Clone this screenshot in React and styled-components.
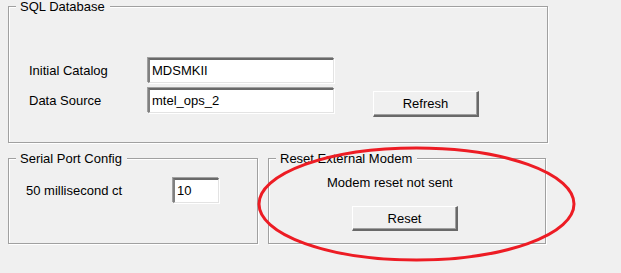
import styled, { createGlobalStyle } from 'styled-components';

const GlobalStyle = createGlobalStyle`
  html, body {
    margin: 0;
    padding: 0;
    background: #f0f0f0;
  }
  body {
    font-family: "Liberation Sans", Arial, sans-serif;
    font-size: 13px;
    color: #000;
  }
`;

const Page = styled.div`
  position: relative;
  width: 621px;
  height: 273px;
  padding: 6px 0 0 8px;
  box-sizing: border-box;
  overflow: hidden;
`;

// etched group box, like a win32 GroupBox
const Group = styled.div`
  position: relative;
  box-sizing: border-box;
  width: ${(p) => p.width}px;
  height: ${(p) => p.height}px;
  border: 1px solid #a0a0a0;
  box-shadow: 1px 1px 0 #fff, inset 1px 1px 0 #fff;
`;

const Legend = styled.span`
  position: absolute;
  top: -8px;
  left: 7px;
  padding: 0 5px 0 4px;
  background: #f0f0f0;
  line-height: 15px;
  white-space: nowrap;
`;

const BottomRow = styled.div`
  display: flex;
  gap: 10px;
  margin-top: 15px;
`;

const SqlGrid = styled.div`
  display: grid;
  grid-template-columns: 119px 186px auto;
  grid-auto-rows: 25px;
  row-gap: 5px;
  align-items: center;
  padding: 51px 0 0 20px;
`;

const Label = styled.span`
  line-height: 15px;
  white-space: nowrap;
`;

const TextBox = styled.div`
  box-sizing: border-box;
  width: ${(p) => p.width}px;
  height: 25px;
  background: #fff;
  border-style: solid;
  border-width: 2px 1px 1px 2px;
  border-color: #696969 #e3e3e3 #e3e3e3 #808080;
  box-shadow: -1px -1px 0 #a0a0a0, 1px 1px 0 #fff;
  padding: 3px 0 0 2px;
  line-height: 16px;
  white-space: nowrap;
  overflow: hidden;
`;

const Button = styled.div`
  box-sizing: border-box;
  width: 106px;
  height: ${(p) => p.height || 26}px;
  display: flex;
  align-items: center;
  justify-content: center;
  background: #f0f0f0;
  border-style: solid;
  border-width: 1px 2px 2px 1px;
  border-color: #fff #696969 #696969 #fff;
  box-shadow: inset -1px -1px 0 #a0a0a0;
  margin: ${(p) => p.margin || '0'};
  align-self: start;
`;

const SerialRow = styled.div`
  display: flex;
  align-items: center;
  padding: 19px 0 0 17px;
`;

const SerialLabel = styled(Label)`
  width: 147px;
`;

const ModemBody = styled.div`
  display: flex;
  flex-direction: column;
  align-items: flex-start;
  padding: 16px 0 0 58px;
  gap: 16px;
`;

const Circle = styled.svg`
  position: absolute;
  left: 0;
  top: 0;
  pointer-events: none;
`;

const App = () => (
  <>
    <GlobalStyle />
    <Page>
      <Group width={540} height={137}>
        <Legend>SQL Database</Legend>
        <SqlGrid>
          <Label>Initial Catalog</Label>
          <TextBox width={186}>MDSMKII</TextBox>
          <span />
          <Label>Data Source</Label>
          <TextBox width={186}>mtel_ops_2</TextBox>
          <Button margin="3px 0 0 39px">Refresh</Button>
        </SqlGrid>
      </Group>

      <BottomRow>
        <Group width={250} height={86}>
          <Legend>Serial Port Config</Legend>
          <SerialRow>
            <SerialLabel>50 millisecond ct</SerialLabel>
            <TextBox width={46}>10</TextBox>
          </SerialRow>
        </Group>

        <Group width={278} height={86}>
          <Legend>Reset External Modem</Legend>
          <ModemBody>
            <Label>Modem reset not sent</Label>
            <Button height={25} margin="0 0 0 25px">Reset</Button>
          </ModemBody>
        </Group>
      </BottomRow>

      <Circle width="621" height="273">
        <ellipse cx="416.5" cy="204" rx="157.5" ry="56" fill="none" stroke="#ed1c24" strokeWidth="3" />
      </Circle>
    </Page>
  </>
);

export default App;
